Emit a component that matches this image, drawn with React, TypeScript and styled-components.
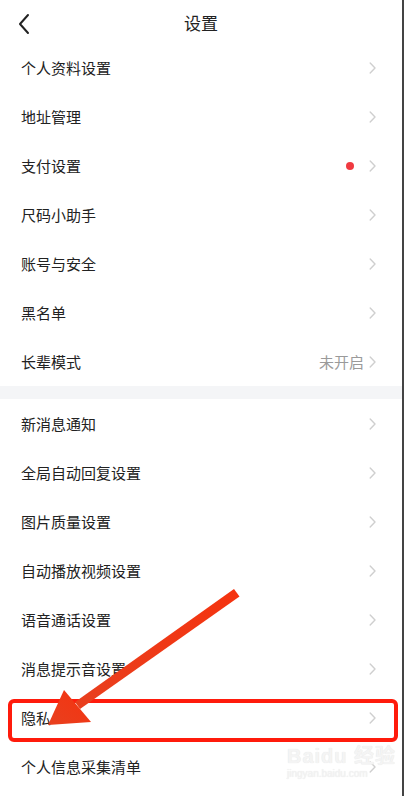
import React from "react";
import styled, { createGlobalStyle } from "styled-components";

const Global = createGlobalStyle`
  html, body { margin: 0; padding: 0; background: #fff; }
  body { font-family: "Noto Sans CJK SC", "Noto Sans", sans-serif; }
`;

const Page = styled.div`
  position: relative;
  width: 402px;
  height: 796px;
  overflow: hidden;
  background: #fff;
  border-right: 2px solid #444;
`;

const Header = styled.div`
  height: 43px;
  display: flex;
  align-items: center;
  justify-content: center;
  position: relative;
`;

const BackBtn = styled.div`
  position: absolute;
  left: 17px;
  top: 13px;
  width: 14px;
  height: 22px;
  display: flex;
`;

const Title = styled.div`
  font-size: 17px;
  color: #222;
  line-height: 1;
  margin-top: 2px;
`;

const Section = styled.div`
  display: flex;
  flex-direction: column;
`;

const Gap = styled.div`
  height: 13px;
  background: #f4f5f7;
`;

const Row = styled.div`
  height: 49px;
  display: flex;
  align-items: center;
  padding: 0 26px 0 21px;
`;

const Label = styled.div`
  flex: 1;
  font-size: 15px;
  color: #222;
  line-height: 1;
`;

const Value = styled.div`
  font-size: 15px;
  color: #9a9a9a;
  margin-right: 5px;
  line-height: 1;
`;

const Dot = styled.div`
  width: 8px;
  height: 8px;
  border-radius: 50%;
  background: #f03a40;
  margin-right: 15px;
`;

const Chev = styled.svg`
  width: 7px;
  height: 12px;
  display: block;
`;

const Highlight = styled.div`
  position: absolute;
  left: 8px;
  top: 699px;
  width: 382px;
  height: 35px;
  border: 4px solid #ff1b0c;
  border-radius: 6px;
  pointer-events: none;
`;

const ArrowSvg = styled.svg`
  position: absolute;
  left: 0;
  top: 0;
  pointer-events: none;
`;

const Watermark = styled.div`
  position: absolute;
  left: 287px;
  top: 744px;
  display: flex;
  flex-direction: column;
  align-items: flex-start;
  color: #f4f4f4;
  text-shadow: 0 0 1px #e0e0e0;
  font-family: "Liberation Sans", "Noto Sans CJK SC", sans-serif;
  pointer-events: none;
`;

const WmTop = styled.div`
  font-size: 20px;
  font-weight: 700;
  line-height: 24px;
  letter-spacing: 1px;
`;

const WmBottom = styled.div`
  font-size: 10px;
  line-height: 12px;
`;

const Chevron = () => (
  <Chev viewBox="0 0 7 12">
    <path d="M1.2 1 L6 6 L1.2 11" fill="none" stroke="#cfcfcf" strokeWidth="1.4" strokeLinecap="round" strokeLinejoin="round" />
  </Chev>
);

type Item = { label: string; value?: string; dot?: boolean };

const section1: Item[] = [
  { label: "个人资料设置" },
  { label: "地址管理" },
  { label: "支付设置", dot: true },
  { label: "尺码小助手" },
  { label: "账号与安全" },
  { label: "黑名单" },
  { label: "长辈模式", value: "未开启" },
];

const section2: Item[] = [
  { label: "新消息通知" },
  { label: "全局自动回复设置" },
  { label: "图片质量设置" },
  { label: "自动播放视频设置" },
  { label: "语音通话设置" },
  { label: "消息提示音设置" },
  { label: "隐私" },
  { label: "个人信息采集清单" },
];

const SettingRow = ({ item }: { item: Item }) => (
  <Row>
    <Label>{item.label}</Label>
    {item.dot && <Dot />}
    {item.value && <Value>{item.value}</Value>}
    <Chevron />
  </Row>
);

export default function App() {
  return (
    <>
      <Global />
      <Page>
        <Header>
          <BackBtn>
            <svg width="14" height="22" viewBox="0 0 14 22">
              <path d="M11 2 L3 11 L11 20" fill="none" stroke="#222" strokeWidth="2" strokeLinecap="round" strokeLinejoin="round" />
            </svg>
          </BackBtn>
          <Title>设置</Title>
        </Header>
        <Section>
          {section1.map((it) => (
            <SettingRow key={it.label} item={it} />
          ))}
        </Section>
        <Gap />
        <Section>
          {section2.map((it) => (
            <SettingRow key={it.label} item={it} />
          ))}
        </Section>
        <Highlight />
        <Watermark>
          <WmTop>Baidu 经验</WmTop>
          <WmBottom>jingyan.baidu.com</WmBottom>
        </Watermark>
        <ArrowSvg width="402" height="796" viewBox="0 0 402 796">
          <defs>
            <linearGradient id="ag" x1="0" y1="1" x2="1" y2="0">
              <stop offset="0" stopColor="#e8401f" />
              <stop offset="1" stopColor="#f5330f" />
            </linearGradient>
          </defs>
          <path d="M234 589 L239.5 596.5 L80 709 L75 702 Z" fill="url(#ag)" />
          <path d="M48 725 L64 690 L91 722 Z" fill="url(#ag)" />
        </ArrowSvg>
      </Page>
    </>
  );
}
